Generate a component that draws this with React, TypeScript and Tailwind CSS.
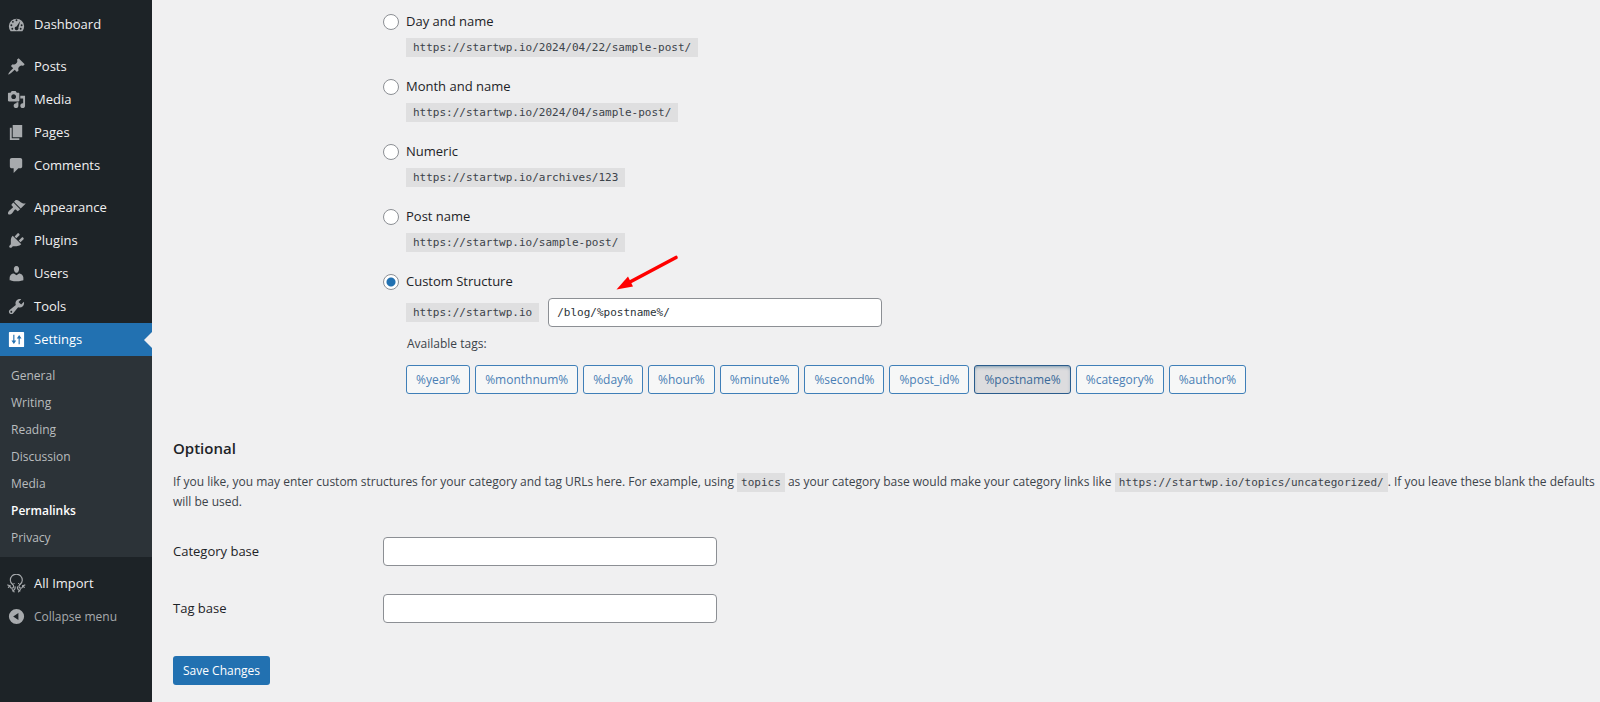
import { useState } from "react"
import type { ReactNode } from "react"
import clsx from "clsx"

type MenuItem = { name: string; icon: ReactNode }

const icons = {
  dashboard: (
    <path
      fillRule="evenodd"
      d="M3.8 17h12.4A8 8 0 1 0 3.8 17zM10 4.6a1 1 0 1 1 0 2 1 1 0 0 1 0-2zM6.2 6.2a1 1 0 1 1 0 2 1 1 0 0 1 0-2zM4.6 9.8a1 1 0 1 1 0 2 1 1 0 0 1 0-2zM15.4 9.8a1 1 0 1 1 0 2 1 1 0 0 1 0-2zM13.9 6.2l-1.9 7.2a2 2 0 1 1-2-1.4zM5.6 13.4a1 1 0 1 1 0 2 1 1 0 0 1 0-2zM14.4 13.4a1 1 0 1 1 0 2 1 1 0 0 1 0-2z"
    />
  ),
  posts: (
    <path d="M10.44 3.02l1.82-1.82 6.36 6.35-1.83 1.82c-1.05-.68-2.48-.57-3.41.36l-.75.75c-.92.93-1.04 2.35-.35 3.41l-1.83 1.82-2.41-2.41-2.8 2.79c-.42.42-3.38 2.71-3.8 2.29s1.86-3.39 2.28-3.81l2.79-2.79L4.1 9.36l1.83-1.82c1.05.69 2.48.57 3.4-.36l.75-.75c.93-.92 1.05-2.35.36-3.41z" />
  ),
  media: (
    <path d="M13 11V4c0-.55-.45-1-1-1h-1.67L9 1H5L3.67 3H2c-.55 0-1 .45-1 1v7c0 .55.45 1 1 1h10c.55 0 1-.45 1-1zM7 4.5c1.38 0 2.5 1.12 2.5 2.5S8.38 9.5 7 9.5 4.5 8.38 4.5 7 5.62 4.5 7 4.5zM14 6h5v10.5c0 1.38-1.12 2.5-2.5 2.5S14 17.88 14 16.5s1.12-2.5 2.5-2.5c.17 0 .34.02.5.05V9h-3V6zm-4 8.05V13h2v3.5c0 1.38-1.12 2.5-2.5 2.5S7 17.88 7 16.5 8.12 14 9.5 14c.17 0 .34.02.5.05z" />
  ),
  pages: <path d="M6 15V2h10v13H6zm-1 1h8v2H3V5h2v11z" />,
  comments: <path d="M5 2h9c1.1 0 2 .9 2 2v7c0 1.1-.9 2-2 2h-2l-5 5v-5H5c-1.1 0-2-.9-2-2V4c0-1.1.9-2 2-2z" />,
  appearance: (
    <path d="M14.48 11.06L7.41 3.99l1.5-1.5c.5-.56 2.3-.47 3.51.32 1.21.8 1.43 1.28 2.91 2.1 1.18.64 2.45 1.26 4.45.85zm-.71.71L6.7 4.7 4.93 6.47c-.39.39-.39 1.02 0 1.41l1.06 1.06c.39.39.39 1.03 0 1.42-.6.6-1.43 1.11-2.21 1.69-.35.26-.7.53-1.01.84C1.43 14.23.4 16.08 1.4 17.07c.99 1 2.84-.03 4.18-1.36.31-.31.58-.66.85-1.02.57-.78 1.08-1.61 1.69-2.21.39-.39 1.02-.39 1.41 0l1.06 1.06c.39.39 1.02.39 1.41 0z" />
  ),
  plugins: (
    <path d="M13.11 4.36L9.87 7.6 8 5.73l3.24-3.24c.35-.34 1.05-.2 1.56.32.52.51.66 1.21.31 1.55zm-8 1.77l.91-1.12 9.01 9.01-1.19.84c-.71.71-2.63 1.16-3.82 1.16H6.14L4.9 17.26c-.59.59-1.54.59-2.12 0-.59-.58-.59-1.53 0-2.12l1.24-1.24v-3.88c0-1.13.4-3.19 1.09-3.89zm7.26 3.97l3.24-3.24c.34-.35 1.04-.21 1.55.31.52.51.66 1.21.31 1.55l-3.24 3.25z" />
  ),
  users: (
    <path d="M10 9.25c-2.27 0-2.73-3.44-2.73-3.44C7 4.02 7.82 2 9.97 2c2.16 0 2.98 2.02 2.71 3.81 0 0-.41 3.44-2.68 3.44zm0 2.57L12.72 10c2.39 0 4.52 2.33 4.52 4.53v2.49s-3.65 1.13-7.24 1.13c-3.65 0-7.24-1.13-7.24-1.13v-2.49c0-2.25 1.94-4.48 4.47-4.48z" />
  ),
  tools: (
    <path d="M16.68 9.77c-1.34 1.34-3.3 1.67-4.95.99l-5.41 6.52c-.99.99-2.59.99-3.58 0s-.99-2.59 0-3.57l6.52-5.42c-.68-1.65-.35-3.61.99-4.95 1.28-1.28 3.12-1.62 4.72-1.06l-2.89 2.89 2.82 2.82 2.86-2.87c.53 1.58.18 3.39-1.08 4.65zM3.81 16.21c.4.39 1.04.39 1.43 0 .4-.4.4-1.04 0-1.43-.39-.4-1.03-.4-1.43 0-.39.39-.39 1.03 0 1.43z" />
  ),
  settings: (
    <path
      fillRule="evenodd"
      d="M18 17V3c0-.55-.45-1-1-1H3c-.55 0-1 .45-1 1v14c0 .55.45 1 1 1h14c.55 0 1-.45 1-1zM7.8 11h1.9l-2.5 3.8L4.7 11h1.9V5h1.2zM12.2 9h-1.9l2.5-3.8L15.3 9h-1.9v6h-1.2z"
    />
  ),
  allImport: (
    <g fill="none" stroke="currentColor" strokeWidth="1.2" strokeLinecap="round">
      <path d="M6 11C4.400 9.800 3.500 8.300 3.500 6.500a6.300 6.300 0 0 1 12.600 0c0 1.800-.9 3.300-2.500 4.500" />
      <path d="M6 11c1.500 1.200 1.400 3.600-.6 3.900-1.800.2-2.400-1.200-2.200-2.400M13.600 11c-1.500 1.200-1.400 3.600.6 3.900 1.800.2 2.400-1.200 2.200-2.400" />
      <path d="M.8 11.500l2.400 1M18.800 11.500l-2.400 1M1.500 14l1.700-1.500M18.100 14l-1.700-1.500" />
      <path d="M8.600 13.500c.2 2-.6 3.400-2.600 4.400M11 13.500c-.2 2 .6 3.400 2.600 4.400M5.500 16.300l2 2.500M14.100 16.300l-2 2.500" />
      <path d="M7.300 10h.2M12.100 10h.2" />
    </g>
  ),
  collapse: <path fillRule="evenodd" d="M10 2a8 8 0 1 1 0 16 8 8 0 0 1 0-16zM12 6.2L6.5 10l5.5 3.8z" />,
}

const menuGroups: MenuItem[][] = [
  [{ name: "Dashboard", icon: icons.dashboard }],
  [
    { name: "Posts", icon: icons.posts },
    { name: "Media", icon: icons.media },
    { name: "Pages", icon: icons.pages },
    { name: "Comments", icon: icons.comments },
  ],
  [
    { name: "Appearance", icon: icons.appearance },
    { name: "Plugins", icon: icons.plugins },
    { name: "Users", icon: icons.users },
    { name: "Tools", icon: icons.tools },
    { name: "Settings", icon: icons.settings },
  ],
]

const settingsPages = ["General", "Writing", "Reading", "Discussion", "Media", "Permalinks", "Privacy"]

const structures = [
  { id: "day", name: "Day and name", example: "https://startwp.io/2024/04/22/sample-post/" },
  { id: "month", name: "Month and name", example: "https://startwp.io/2024/04/sample-post/" },
  { id: "numeric", name: "Numeric", example: "https://startwp.io/archives/123" },
  { id: "post", name: "Post name", example: "https://startwp.io/sample-post/" },
]

const tags = [
  "%year%",
  "%monthnum%",
  "%day%",
  "%hour%",
  "%minute%",
  "%second%",
  "%post_id%",
  "%postname%",
  "%category%",
  "%author%",
]

function Icon({ children }: { children: ReactNode }) {
  return (
    <svg viewBox="0 0 20 20" fill="currentColor" className="h-[19px] w-[19px] shrink-0" aria-hidden="true">
      {children}
    </svg>
  )
}

function MenuLink({ item, active = false }: { item: MenuItem; active?: boolean }) {
  return (
    <a
      href="#"
      className={clsx(
        "relative flex h-[33px] items-center gap-2 pl-[7px] text-[13px]",
        active ? "bg-[#2271b1] text-white" : "text-[#f0f0f1] hover:text-[#72aee6]"
      )}
    >
      <span className={active ? "text-white" : "text-[#a7aaad]"}>
        <Icon>{item.icon}</Icon>
      </span>
      <span>{item.name}</span>
      {active && (
        <span className="absolute top-1/2 right-0 -translate-y-1/2 border-8 border-transparent border-r-[#f0f0f1]" />
      )}
    </a>
  )
}

function Sidebar() {
  return (
    <nav className="flex w-[152px] shrink-0 flex-col bg-[#1d2327] pt-2">
      <div className="flex flex-col gap-[9px]">
        {menuGroups.map((group) => (
          <div key={group[0].name}>
            {group.map((item) => (
              <MenuLink key={item.name} item={item} active={item.name === "Settings"} />
            ))}
          </div>
        ))}
      </div>

      {/* Settings submenu */}
      <div className="bg-[#2c3338] py-1.5">
        {settingsPages.map((page) => (
          <a
            key={page}
            href="#"
            className={clsx(
              "flex h-[27px] items-center pl-[11px] text-[12px]",
              page === "Permalinks" ? "font-semibold text-white" : "text-[#b9bcbe] hover:text-[#72aee6]"
            )}
          >
            {page}
          </a>
        ))}
      </div>

      <div className="pt-2.5">
        <MenuLink item={{ name: "All Import", icon: icons.allImport }} />
        <button type="button" className="flex h-[33px] w-full items-center gap-2 pl-[7px] text-[12px] text-[#a7aaad]">
          <Icon>{icons.collapse}</Icon>
          <span>Collapse menu</span>
        </button>
      </div>
    </nav>
  )
}

function Code({ children, inline = false }: { children: ReactNode; inline?: boolean }) {
  return (
    <code
      className={clsx(
        "bg-[#dfdfe0] py-[3px] font-['DejaVu_Sans_Mono',monospace] text-[11px] leading-[13px] text-[#3c434a]",
        inline ? "px-1" : "px-[7px]"
      )}
    >
      {children}
    </code>
  )
}

function StructureRadio({ id, name, checked, onChange }: { id: string; name: string; checked: boolean; onChange: () => void }) {
  return (
    <label className="flex h-5 items-center gap-[7px] text-[13px] text-[#1d2327]">
      <input
        type="radio"
        name="structure"
        value={id}
        checked={checked}
        onChange={onChange}
        className="h-4 w-4 appearance-none rounded-full border border-[#8c8f94] bg-white checked:bg-[radial-gradient(circle,#2271b1_0_4px,#fff_5px)]"
      />
      {name}
    </label>
  )
}

export default function App() {
  const [selected, setSelected] = useState("custom")
  const [structure, setStructure] = useState("/blog/%postname%/")

  const toggleTag = (tag: string) => {
    setSelected("custom")
    setStructure(structure.includes(tag) ? structure.replace(tag + "/", "") : structure + tag + "/")
  }

  const inputClass = "h-[29px] w-[334px] rounded border border-[#8c8f94] bg-white px-2 text-[#2c3338]"

  return (
    <div className="flex min-h-screen bg-[#f0f0f1] font-['Open_Sans',sans-serif] text-[12px] text-[#3c434a]">
      <Sidebar />

      <main className="min-w-0 flex-1 pt-3 pl-[21px]">
        <div className="ml-[210px] flex flex-col gap-5">
          {structures.map((item) => (
            <div key={item.id}>
              <StructureRadio
                id={item.id}
                name={item.name}
                checked={selected === item.id}
                onChange={() => setSelected(item.id)}
              />
              <div className="mt-1.5 flex pl-[23px]">
                <Code>{item.example}</Code>
              </div>
            </div>
          ))}

          <div className="relative">
            <StructureRadio
              id="custom"
              name="Custom Structure"
              checked={selected === "custom"}
              onChange={() => setSelected("custom")}
            />
            <div className="mt-1.5 flex items-center gap-[9px] pl-[23px]">
              <Code>https://startwp.io</Code>
              <input
                type="text"
                aria-label="Custom permalink structure"
                value={structure}
                onChange={(e) => setStructure(e.target.value)}
                className={clsx(inputClass, "font-['DejaVu_Sans_Mono',monospace] text-[11px]")}
              />
            </div>

            {/* Red pointer towards the structure field */}
            <svg viewBox="0 0 64 38" className="absolute -top-[18px] left-[232px] h-[38px] w-16" aria-hidden="true">
              <path d="M61 3.5L14 28.5" stroke="#f00" strokeWidth="3.6" strokeLinecap="round" />
              <path d="M1.500 35.500l11.500-13 5 10z" fill="#f00" />
            </svg>

            <p className="mt-[9px] pl-6 leading-4">Available tags:</p>
            <div className="mt-[13px] flex flex-wrap gap-[5px] pl-[23px]">
              {tags.map((tag) => (
                <button
                  key={tag}
                  type="button"
                  onClick={() => toggleTag(tag)}
                  className={clsx(
                    "h-[29px] rounded-[3px] border px-[9px]",
                    structure.includes(tag)
                      ? "border-[#2a5c8c] bg-[#dcdcde] text-[#3a6a99] shadow-[inset_0_2px_5px_-3px_#0a4b78]"
                      : "border-[#3f7fb8] bg-[#f6f7f7] text-[#4a7fb5]"
                  )}
                >
                  {tag}
                </button>
              ))}
            </div>
          </div>
        </div>

        <h2 className="mt-11 text-[15px] leading-5 font-semibold text-[#1d2327]">Optional</h2>
        <p className="mt-3.5 leading-5">
          If you like, you may enter custom structures for your category and tag URLs here. For example, using{" "}
          <Code inline>topics</Code> as your category base would make your category links like{" "}
          <Code inline>https://startwp.io/topics/uncategorized/</Code>. If you leave these blank the defaults will be
          used.
        </p>

        <div className="mt-[25px] grid grid-cols-[210px_1fr] items-center gap-y-7 text-[13px] text-[#1d2327]">
          <label htmlFor="category-base">Category base</label>
          <input id="category-base" type="text" className={inputClass} />
          <label htmlFor="tag-base">Tag base</label>
          <input id="tag-base" type="text" className={inputClass} />
        </div>

        <button type="submit" className="mt-[33px] h-[29px] rounded-[3px] bg-[#2271b1] px-2.5 text-white">
          Save Changes
        </button>
      </main>
    </div>
  )
}
